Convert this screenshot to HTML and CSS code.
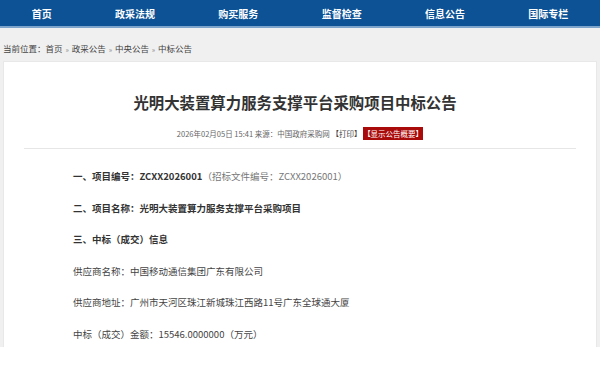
FILE: index.html
```html
<!DOCTYPE html>
<html lang="zh-CN">
<head>
    <meta charset="UTF-8">
    <meta name="viewport" content="width=device-width, initial-scale=1.0">
    <title>光明大装置算力服务支撑平台采购项目中标公告</title>
    <link rel="stylesheet" href="styles.css">
</head>
<body>

    <nav class="topnav">
        <a href="#">首页</a>
        <a href="#">政采法规</a>
        <a href="#">购买服务</a>
        <a href="#">监督检查</a>
        <a href="#">信息公告</a>
        <a href="#">国际专栏</a>
    </nav>

    <div class="main">
        <div class="crumbs">
            当前位置：<a href="#">首页</a> <span class="sep">»</span> <a href="#">政采公告</a> <span class="sep">»</span> <a href="#">中央公告</a> <span class="sep">»</span> <a href="#">中标公告</a>
        </div>

        <div class="article">
            <h2 class="title">光明大装置算力服务支撑平台采购项目中标公告</h2>
            <div class="meta">
                2026年02月05日 15:41 来源：中国政府采购网 <span class="print">【打印】</span> <span class="tag">【显示公告概要】</span>
            </div>

            <div class="content">
                <p class="strong">一、项目编号：ZCXX2026001<span class="note">（招标文件编号：ZCXX2026001）</span></p>
                <p class="strong">二、项目名称：光明大装置算力服务支撑平台采购项目</p>
                <p class="strong">三、中标（成交）信息</p>
                <p>供应商名称：中国移动通信集团广东有限公司</p>
                <p>供应商地址：广州市天河区珠江新城珠江西路11号广东全球通大厦</p>
                <p>中标（成交）金额：15546.0000000（万元）</p>
            </div>
        </div>
    </div>

</body>
</html>
```

FILE: styles.css
```css
body {
    margin: 0;
    background-color: #fff;
    font-family: "Noto Sans CJK SC", "Liberation Sans", sans-serif;
    color: #333;
}
a {
    color: inherit;
    text-decoration: none;
}

/* 顶部导航 */
.topnav {
    height: 26px;
    background-color: #0c5295;
    border-bottom: 2px solid #7da4cb;
    display: flex;
    justify-content: space-around;
    align-items: center;
}
.topnav a {
    color: #fff;
    font-size: 10px;
    font-weight: bold;
}

/* 灰色背景区 */
.main {
    background-color: #f0f0f0;
    padding: 0 3px;
}
.crumbs {
    font-size: 8.5px;
    line-height: 12px;
    color: #444;
    padding: 14px 0 6px;
}
.crumbs .sep {
    color: #888;
    font-size: 7px;
    margin: 0 1px;
}

/* 正文 */
.article {
    background-color: #fff;
    border: 1px solid #e8e8e8;
    border-bottom: 0;
    padding: 30px 20px 3px;
}
.title {
    margin: 0 10px 0 0;
    text-align: center;
    font-size: 15.4px;
    line-height: 20px;
    color: #333;
}
.meta {
    margin-top: 17px;
    padding-bottom: 9px;
    border-bottom: 1px solid #e6e6e6;
    text-align: center;
    font-size: 7.5px;
    line-height: 10px;
    color: #666;
}
.meta .print {
    color: #444;
}
.meta .tag {
    background-color: #a90a0a;
    color: #fff;
    padding: 1px 0;
}
.content {
    padding: 17px 0 0 49px;
}
.content p {
    margin: 0 0 11.6px;
    font-size: 9.5px;
    line-height: 20px;
    color: #444;
}
.content p:last-child {
    margin-bottom: 0;
}
.content .strong {
    font-weight: bold;
    color: #333;
}
.content .note {
    font-weight: normal;
    color: #777;
}
```
